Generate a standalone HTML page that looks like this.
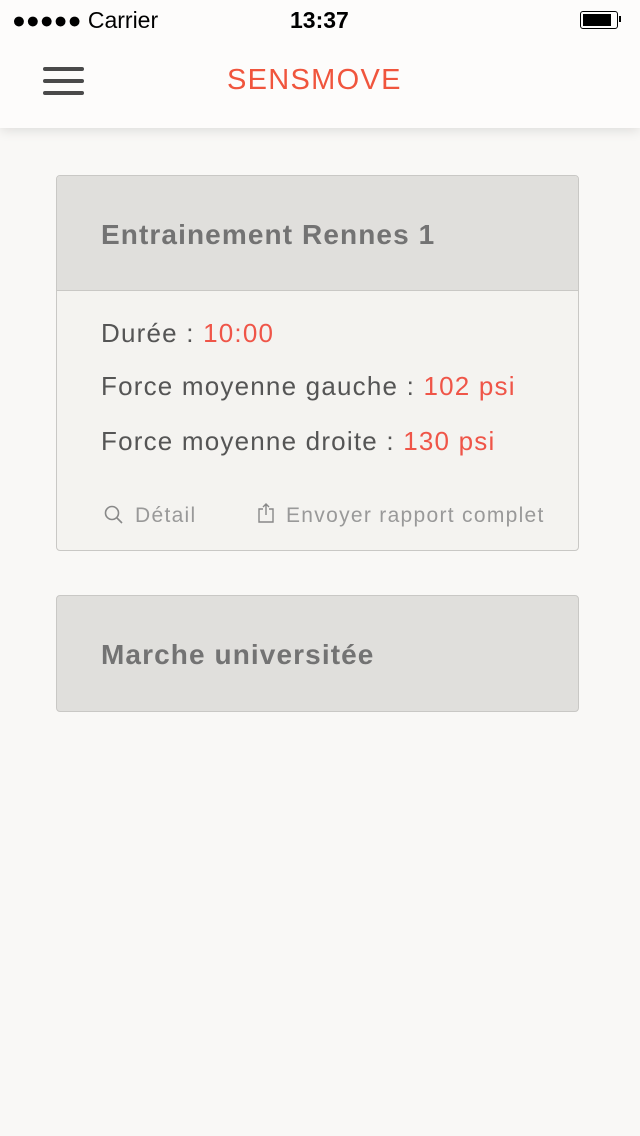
<!DOCTYPE html>
<html><head><meta charset="utf-8"><style>
body{margin:0;width:640px;height:1136px;background:#f9f8f6;font-family:"Liberation Sans",sans-serif;position:relative;overflow:hidden}
.abs{position:absolute}
.hdr{left:0;top:0;width:640px;height:128px;background:#fdfcfb;box-shadow:0 2px 12px rgba(0,0,0,.12)}
.card{left:56px;width:521px;border:1px solid #c9c8c5;border-radius:4px;background:#f4f3f0;overflow:hidden}
.ch{height:115px;background:#e0dfdc;border-bottom:1px solid #c9c8c5;box-sizing:border-box}
.ct{position:absolute;left:44px;font-size:28px;font-weight:bold;color:#737373;letter-spacing:1.1px}
.l{position:absolute;left:44px;font-size:26px;color:#555;letter-spacing:1.2px}
.r{color:#ef5548}
.f{position:absolute;font-size:21px;color:#999;letter-spacing:1.3px}
</style></head><body>
<div class="abs hdr"></div>
<div class="abs" style="left:12px;top:7px;font-size:23px;color:#000">●●●●● Carrier</div>
<div class="abs" style="left:290px;top:7px;font-size:23px;font-weight:bold;color:#000">13:37</div>
<div class="abs" style="left:580px;top:11px;width:36px;height:16px;border:1.5px solid #000;border-radius:3px"><div style="margin:2px;width:28px;height:12px;background:#000"></div></div>
<div class="abs" style="left:619px;top:16px;width:2px;height:6px;background:#000"></div>
<div class="abs" style="left:43px;top:67px;width:41px;height:4px;border-radius:2px;background:#4a4a4a"></div>
<div class="abs" style="left:43px;top:79px;width:41px;height:4px;border-radius:2px;background:#4a4a4a"></div>
<div class="abs" style="left:43px;top:91px;width:41px;height:4px;border-radius:2px;background:#4a4a4a"></div>
<div class="abs" style="left:227px;top:64px;font-size:29px;color:#f0553d;letter-spacing:1.3px">SENSMOVE</div>

<div class="abs card" style="top:175px;height:374px">
<div class="ch"></div>
<div class="ct" style="top:43px">Entrainement Rennes 1</div>
<div class="l" style="top:142px">Durée : <span class="r">10:00</span></div>
<div class="l" style="top:195px">Force moyenne gauche : <span class="r">102 psi</span></div>
<div class="l" style="top:250px">Force moyenne droite : <span class="r">130 psi</span></div>
<svg class="abs" style="left:47px;top:329px" width="20" height="20" viewBox="0 0 20 20" fill="none" stroke="#888" stroke-width="1.6"><circle cx="8" cy="8" r="6.5"/><path d="M13 13l5 5"/></svg>
<div class="f" style="left:78px;top:328px">Détail</div>
<svg class="abs" style="left:200px;top:326px" width="18" height="22" viewBox="0 0 18 22" fill="none" stroke="#888" stroke-width="1.4"><path d="M6 7H2v13h14V7h-4M9 13V2M6 5l3-3 3 3"/></svg>
<div class="f" style="left:229px;top:328px">Envoyer rapport complet</div>
</div>

<div class="abs card" style="top:595px;height:115px;background:#e0dfdc">
<div class="ct" style="top:43px">Marche universitée</div>
</div>
</body></html>
